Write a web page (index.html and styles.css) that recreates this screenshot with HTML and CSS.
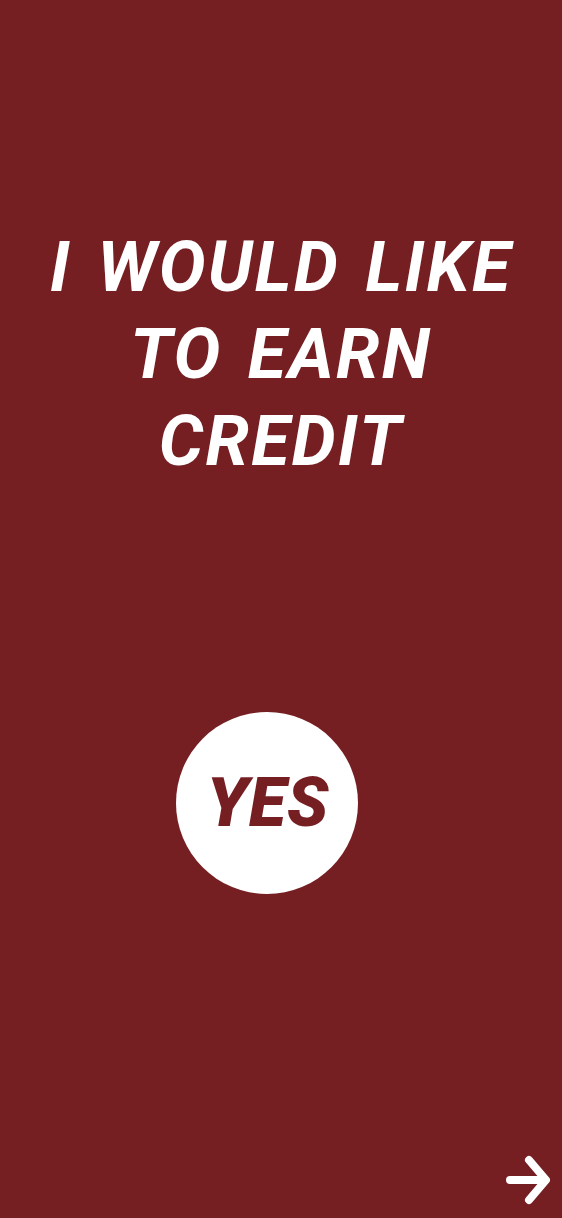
FILE: index.html
```html
<!DOCTYPE html>
<html lang="en">
<head>
<meta charset="utf-8">
<title>Earn credit</title>
<link rel="stylesheet" href="styles.css">
</head>
<body>
<main class="screen">
  <h1 class="title">I WOULD LIKE<br>TO EARN<br>CREDIT</h1>
  <div class="choice">
    <button class="yes">YES</button>
  </div>
  <div class="footer">
    <svg class="next" width="44" height="50" viewBox="0 0 44 50" aria-label="Next">
      <path d="M4 25 H39 M23 5 L40 25 L23 45" fill="none" stroke="#fff" stroke-width="8" stroke-linecap="round" stroke-linejoin="round"/>
    </svg>
  </div>
</main>
</body>
</html>
```
FILE: styles.css
```css
html, body {
  margin: 0;
  padding: 0;
  background: #761f23;
}
.screen {
  height: 1218px;
  box-sizing: border-box;
  display: flex;
  flex-direction: column;
  align-items: center;
  padding-top: 224px;
  font-family: Roboto, "Liberation Sans", sans-serif;
}
.title {
  margin: 0;
  color: #fff;
  font-size: 70px;
  line-height: 87px;
  font-weight: 700;
  font-style: italic;
  text-align: center;
  letter-spacing: 2.2px;
  word-spacing: 6px;
}
.choice {
  margin-top: 227px;
  display: flex;
  justify-content: center;
  width: 100%;
}
.yes {
  width: 182px;
  height: 182px;
  border-radius: 50%;
  border: none;
  background: #fff;
  color: #761f23;
  font-family: Roboto, "Liberation Sans", sans-serif;
  font-size: 68px;
  font-weight: 900;
  font-style: italic;
  letter-spacing: 1px;
  padding: 0 0 0 2px;
  margin-right: 28px;
}
.footer {
  margin-top: auto;
  align-self: stretch;
  display: flex;
  justify-content: flex-end;
  padding: 0 12px 13px 0;
}
.next {
  display: block;
}
```
